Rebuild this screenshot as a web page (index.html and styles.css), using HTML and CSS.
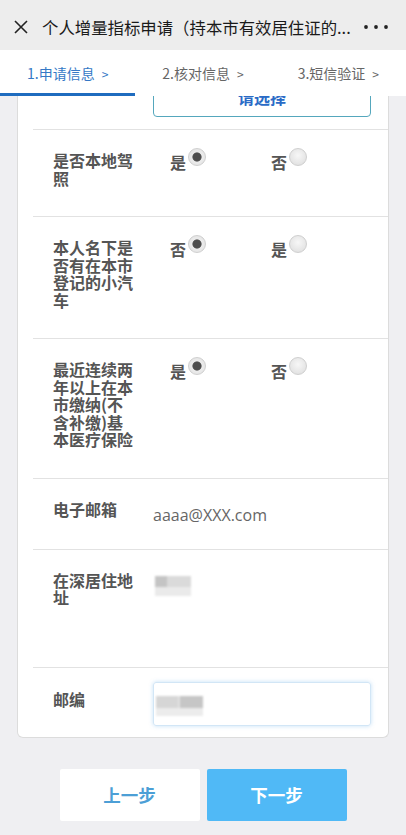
FILE: index.html
```html
<!DOCTYPE html>
<html lang="zh-CN">
<head>
<meta charset="utf-8">
<title>个人增量指标申请</title>
<link rel="stylesheet" href="styles.css">
</head>
<body>
<header class="topbar">
  <svg class="close" width="14" height="14" viewBox="0 0 14 14"><path d="M1 1L13 13M13 1L1 13" stroke="#222" stroke-width="1.6" fill="none"/></svg>
  <div class="title">个人增量指标申请（持本市有效居住证的...</div>
  <svg class="more" width="26" height="6" viewBox="0 0 26 6"><circle cx="3" cy="3" r="1.9" fill="#222"/><circle cx="13" cy="3" r="1.9" fill="#222"/><circle cx="23" cy="3" r="1.9" fill="#222"/></svg>
</header>
<nav class="tabs">
  <div class="tab active">1.申请信息<span class="gt">&gt;</span></div>
  <div class="tab">2.核对信息<span class="gt">&gt;</span></div>
  <div class="tab">3.短信验证<span class="gt">&gt;</span></div>
</nav>
<main class="main">
  <div class="card">
    <div class="clip"><div class="select-btn">请选择</div></div>
    <div class="row">
      <div class="label">是否本地驾照</div>
      <div class="options">
        <div class="option"><span class="opt-text">是</span><span class="radio checked"></span></div>
        <div class="option"><span class="opt-text">否</span><span class="radio"></span></div>
      </div>
    </div>
    <div class="row">
      <div class="label">本人名下是否有在本市登记的小汽车</div>
      <div class="options">
        <div class="option"><span class="opt-text">否</span><span class="radio checked"></span></div>
        <div class="option"><span class="opt-text">是</span><span class="radio"></span></div>
      </div>
    </div>
    <div class="row">
      <div class="label">最近连续两年以上在本市缴纳(不含补缴)基本医疗保险</div>
      <div class="options">
        <div class="option"><span class="opt-text">是</span><span class="radio checked"></span></div>
        <div class="option"><span class="opt-text">否</span><span class="radio"></span></div>
      </div>
    </div>
    <div class="row row-email">
      <div class="label">电子邮箱</div>
      <div class="value email">aaaa@XXX.com</div>
    </div>
    <div class="row">
      <div class="label">在深居住地址</div>
      <div class="value address"><div class="blur blur-addr"></div></div>
    </div>
    <div class="row row-zip">
      <div class="label label-zip">邮编</div>
      <div class="zip-input"><div class="blur blur-zip"></div></div>
    </div>
  </div>
  <div class="actions">
    <div class="btn btn-prev">上一步</div>
    <div class="btn btn-next">下一步</div>
  </div>
</main>
</body>
</html>
```
FILE: styles.css
```css
* { box-sizing: border-box; }
html, body { margin: 0; padding: 0; }
body {
  width: 406px;
  height: 835px;
  overflow: hidden;
  background: #efeff2;
  font-family: "Noto Sans CJK SC", "Noto Sans", sans-serif;
  color: #333;
}
.topbar {
  height: 50px;
  background: #ededed;
  display: flex;
  align-items: center;
  padding: 4px 17px 0 14px;
}
.close { flex: none; }
.title {
  flex: 1;
  margin-left: 14px;
  font-size: 16.4px;
  color: #1a1a1a;
  white-space: nowrap;
  overflow: hidden;
}
.more { flex: none; margin-left: 6px; }
.tabs {
  height: 46px;
  background: #fff;
  display: flex;
}
.tab {
  flex: 1;
  display: flex;
  align-items: center;
  justify-content: center;
  font-size: 14px;
  color: #666;
  border-bottom: 3px solid transparent;
  padding-top: 3px;
}
.gt {
  font-size: 12px;
  margin-left: 7px;
}
.tab.active {
  color: #3478c6;
  border-bottom-color: #1f6cbf;
}
.main { padding: 0 17px; }
.card {
  background: #fff;
  border: 1px solid #dcdcdc;
  border-top: none;
  border-radius: 0 0 6px 6px;
  padding-left: 15px;
}
.clip {
  height: 33px;
  overflow: hidden;
  display: flex;
  align-items: flex-end;
  padding: 0 0 12px 120px;
}
.select-btn {
  flex: none;
  width: 218px;
  height: 40px;
  border: 1px solid #55a7bd;
  border-radius: 4px;
  display: flex;
  align-items: center;
  justify-content: center;
  font-size: 16px;
  font-weight: 700;
  color: #2a6bc6;
}
.row {
  display: flex;
  border-top: 1px solid #e2e2e2;
  padding: 22px 0 29px 20px;
}
.label {
  flex: none;
  width: 82px;
  margin-right: 18px;
  font-size: 16px;
  line-height: 17.5px;
  font-weight: 700;
  color: #555;
}
.options {
  display: flex;
  padding-left: 17px;
}
.option {
  width: 101px;
  display: flex;
  align-items: flex-start;
}
.opt-text {
  font-size: 16px;
  line-height: 17.5px;
  font-weight: 700;
  color: #555;
  margin-top: 2px;
}
.radio {
  width: 18px;
  height: 18px;
  border-radius: 50%;
  margin-left: 2px;
  margin-top: -4px;
  border: 1px solid #cfcfcf;
  background: radial-gradient(circle at 50% 40%, #f7f7f7 0%, #e4e4e4 70%, #d6d6d6 100%);
}
.radio.checked {
  background: radial-gradient(circle at 50% 50%, #4e4e4e 0, #4e4e4e 3.6px, #5a5a5a 4.2px, #ececec 5px, #e0e0e0 100%);
}
.row-email { padding-bottom: 24px; }
.email {
  font-family: "Open Sans", "Noto Sans", sans-serif;
  font-size: 16px;
  line-height: 20px;
  padding-top: 4px;
  color: #666;
}
.address {
  height: 66px;
  padding: 4px 0 0 2px;
}
.blur { filter: blur(1.2px); }
.blur-addr {
  width: 36px;
  height: 20px;
  background:
    linear-gradient(to bottom, transparent 0, transparent 11px, #eaeaea 11px, #eaeaea 20px),
    linear-gradient(to right, #c4c4c4 0, #c4c4c4 12px, #dadada 12px, #dadada 100%);
  background-size: 100% 100%, 100% 11px;
  background-repeat: no-repeat;
}
.row-zip { padding: 14px 0 11px 20px; }
.label-zip { margin-top: 9px; }
.zip-input {
  width: 218px;
  height: 44px;
  border: 1px solid #d2e6f6;
  border-radius: 3px;
  box-shadow: 0 0 4px rgba(90, 165, 230, 0.35);
  padding: 13px 0 0 2px;
}
.blur-zip {
  width: 47px;
  height: 20px;
  background:
    linear-gradient(to bottom, transparent 0, transparent 12px, #ececec 12px, #ececec 20px),
    linear-gradient(to right, #d6d6d6 0, #d6d6d6 22px, #e2e2e2 22px, #e2e2e2 24px, #c6c6c6 24px, #c6c6c6 100%);
  background-size: 100% 100%, 100% 12px;
  background-repeat: no-repeat;
}
.actions {
  display: flex;
  justify-content: center;
  gap: 7px;
  margin-top: 31px;
}
.btn {
  width: 140px;
  height: 52px;
  border-radius: 2px;
  display: flex;
  align-items: center;
  justify-content: center;
  font-size: 17.5px;
  font-weight: 700;
}
.btn-prev { background: #fff; color: #4c9fd6; }
.btn-next { background: #50b9f6; color: #fff; }
```
